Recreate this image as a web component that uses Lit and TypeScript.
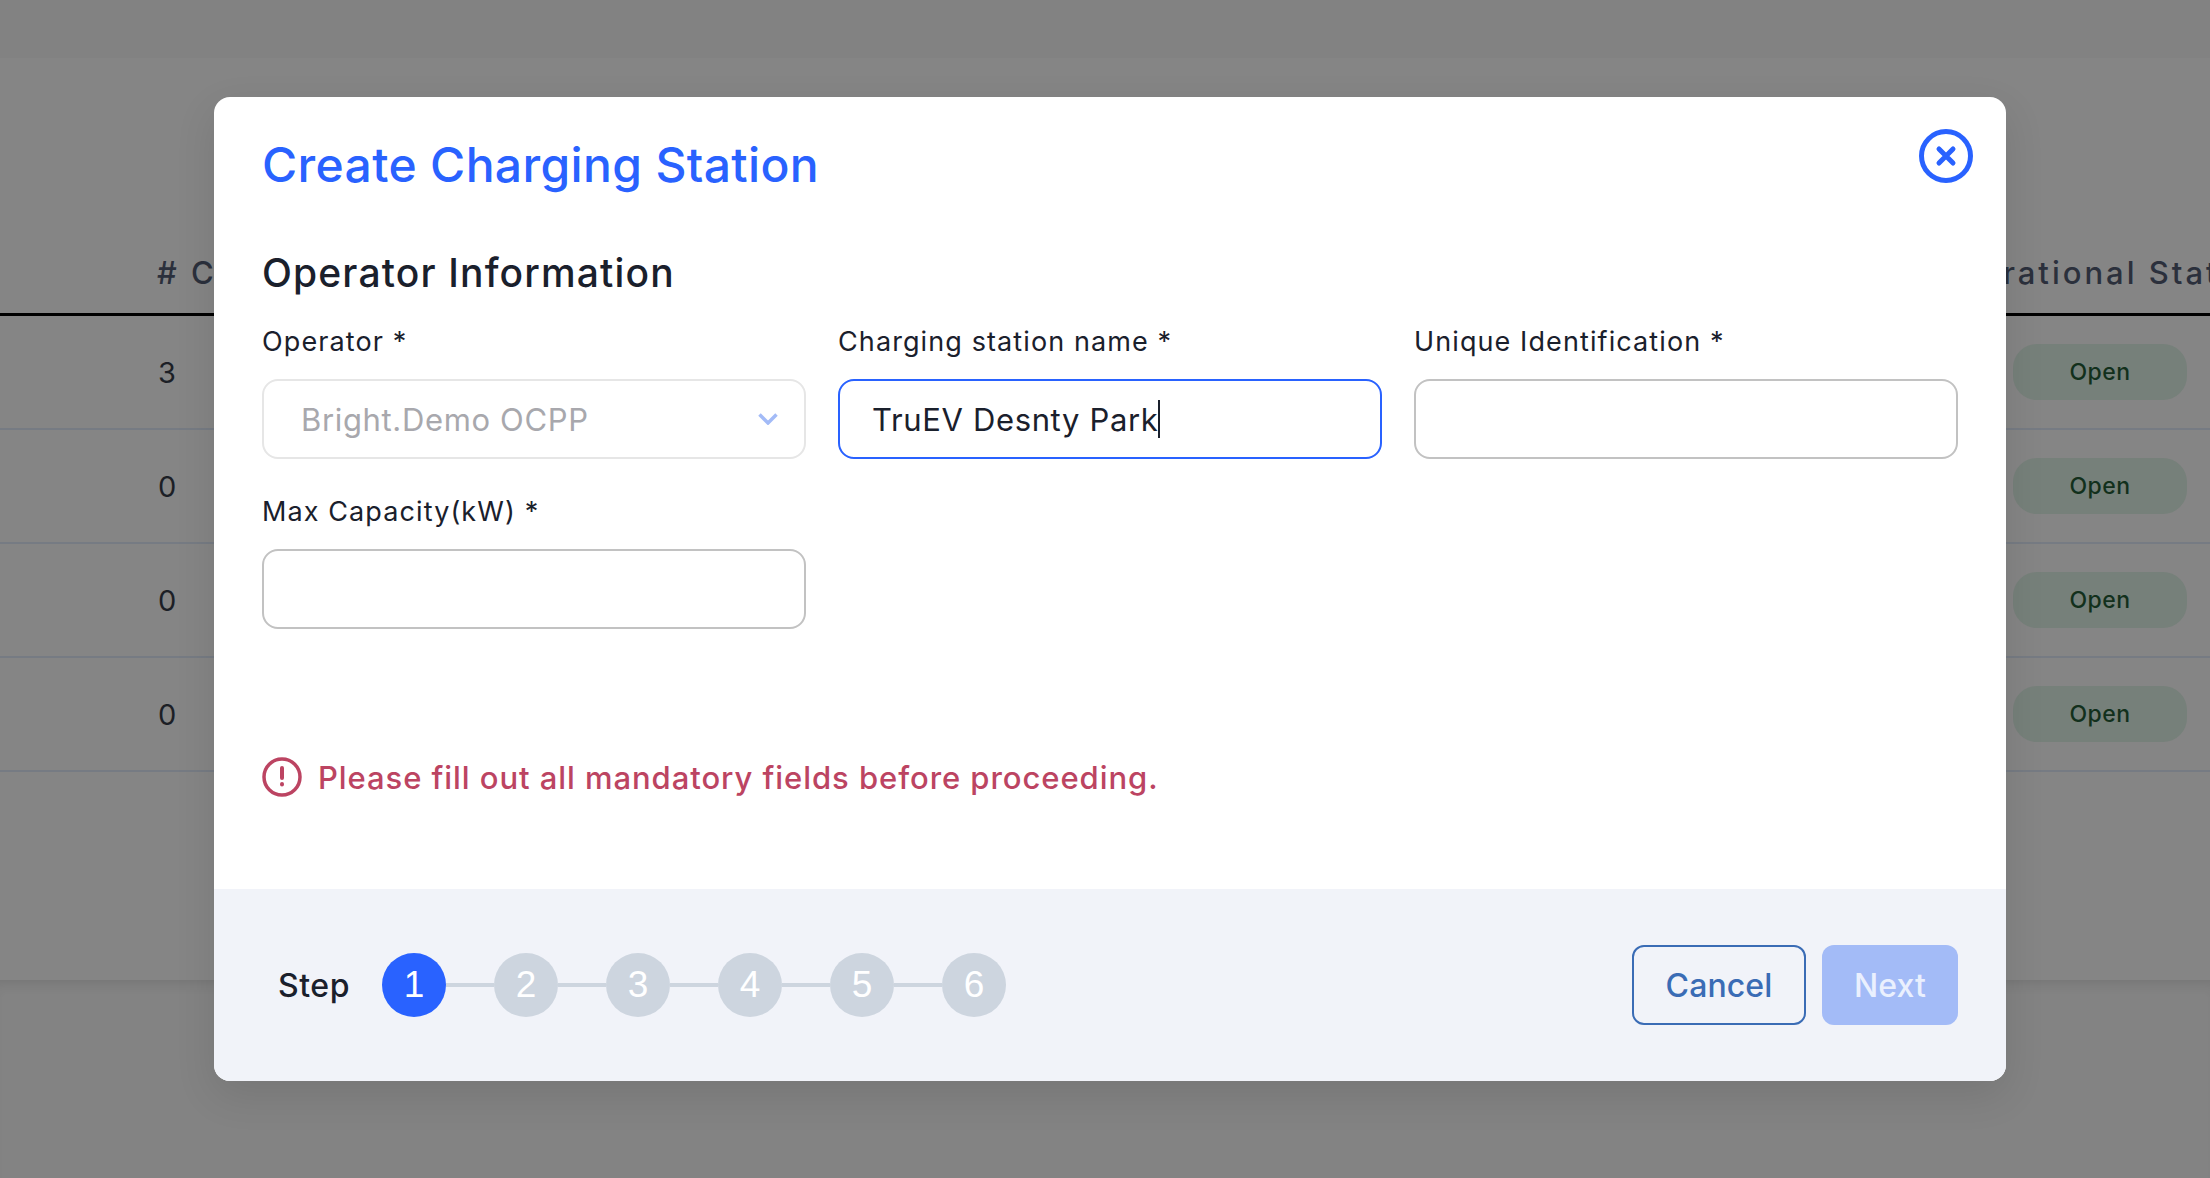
import { LitElement, html, css } from "lit";
import { customElement } from "lit/decorators.js";

@customElement("app-root")
export class AppRoot extends LitElement {
  static styles = css`
    :host { display: block; width: 2210px; height: 1178px; position: relative; overflow: hidden; background: #858585; font-family: "Inter", "Liberation Sans", sans-serif; }
    .page { height: 1178px; display: flex; flex-direction: column; }
    .top { height: 58px; background: #828282; flex: none; }
    .content { height: 922px; flex: none; display: flex; flex-direction: column; padding-top: 174px; box-sizing: border-box; }
    .rest { flex: 1; background: #838383; box-shadow: inset 0 12px 14px -10px rgba(0,0,0,.12); }
    .thead { height: 84px; display: flex; align-items: center; justify-content: space-between; box-sizing: border-box; border-bottom: 3px solid #000; padding-left: 157px; font-size: 31px; font-weight: 500; letter-spacing: 3px; color: #2b303c; white-space: nowrap; }
    .thead span:last-child { margin-right: -51px; }
    .row { height: 114px; box-sizing: border-box; border-bottom: 2px solid #767b83; display: flex; align-items: center; justify-content: space-between; padding: 0 23px 0 158px; font-size: 29px; color: #1c1f26; }
    .pill { width: 174px; height: 56px; border-radius: 24px; background: #76807a; color: #12301c; font-size: 23px; font-weight: 500; letter-spacing: .5px; display: flex; align-items: center; justify-content: center; }
    .overlay { position: absolute; inset: 0; display: flex; align-items: center; padding-left: 214px; }
    .modal { width: 1792px; height: 984px; background: #fff; border-radius: 16px; overflow: hidden; display: flex; flex-direction: column; box-shadow: 0 14px 40px rgba(0,0,0,.1); position: relative; }
    .body { flex: 1; padding: 38px 48px 0; box-sizing: border-box; color: #1a202c; }
    h1 { margin: 0; font-size: 48px; line-height: 60px; font-weight: 500; letter-spacing: .35px; color: #2962ff; }
    h2 { margin: 53px 0 0; font-size: 39px; line-height: 50px; font-weight: 500; letter-spacing: 1.15px; }
    .grid { display: grid; grid-template-columns: repeat(3, 544px); column-gap: 32px; row-gap: 35px; margin-top: 26px; }
    label { display: block; font-size: 27px; line-height: 36px; margin-bottom: 19px; letter-spacing: 1.1px; }
    .input { height: 80px; box-sizing: border-box; border: 2px solid #c2c2c2; border-radius: 16px; background: #fff; display: flex; align-items: center; font-size: 31px; letter-spacing: .65px; padding: 0 32px; }
    .input.sel { border-color: #e6e6e6; color: #a8a8ad; padding: 0 26px 0 37px; justify-content: space-between; }
    .input.focus { border-color: #2962ff; }
    .caret { display: inline-block; width: 2px; height: 38px; background: #1a202c; }
    .error { display: flex; align-items: center; gap: 16px; margin-top: 128px; color: #bc4462; font-size: 31px; font-weight: 500; letter-spacing: .94px; }
    .close { position: absolute; right: 33px; top: 32px; width: 54px; height: 54px; }
    .foot { height: 192px; flex: none; background: #f1f3f9; display: flex; align-items: center; justify-content: space-between; padding: 0 48px 0 64px; }
    .steps { display: flex; align-items: center; }
    .word { font-size: 32px; font-weight: 500; letter-spacing: .55px; color: #1a202c; margin-right: 32px; }
    .dot { width: 64px; height: 64px; border-radius: 50%; background: #cdd5df; color: #fff; font-size: 37px; display: flex; align-items: center; justify-content: center; font-family: "Liberation Sans", sans-serif; }
    .dot.on { background: #2962ff; }
    .bar { width: 48px; height: 4px; background: #cdd5df; }
    .actions { display: flex; gap: 16px; }
    .btn { height: 80px; box-sizing: border-box; border-radius: 12px; font-size: 32px; font-weight: 500; letter-spacing: .1px; display: flex; align-items: center; justify-content: center; }
    .cancel { width: 174px; border: 2px solid #3a6cb5; color: #3a6cb5; }
    .next { width: 136px; background: #a3bbf7; color: #eaf0fe; }
  `;

  render() {
    const rows = ["3", "0", "0", "0"];
    return html`
      <div class="page">
        <div class="top"></div>
        <div class="content">
          <div class="thead"><span># Connectors</span><span>Operational Status</span></div>
          ${rows.map((r) => html`<div class="row"><span>${r}</span><span class="pill">Open</span></div>`)}
        </div>
        <div class="rest"></div>
      </div>
      <div class="overlay">
        <div class="modal">
          <svg class="close" viewBox="0 0 54 54" fill="none" stroke="#2962ff">
            <circle cx="27" cy="27" r="24.5" stroke-width="5"></circle>
            <path d="M20 20 L34 34 M34 20 L20 34" stroke-width="5" stroke-linecap="round"></path>
          </svg>
          <div class="body">
            <h1>Create Charging Station</h1>
            <h2>Operator Information</h2>
            <div class="grid">
              <div>
                <label>Operator *</label>
                <div class="input sel">
                  <span>Bright.Demo OCPP</span>
                  <svg width="20" height="12" viewBox="0 0 20 12" fill="none" stroke="#a3bbf7" stroke-width="3.5"><path d="M1.5 1.5 L10 10 L18.5 1.5"></path></svg>
                </div>
              </div>
              <div>
                <label>Charging station name *</label>
                <div class="input focus"><span>TruEV Desnty Park</span><i class="caret"></i></div>
              </div>
              <div>
                <label>Unique Identification *</label>
                <div class="input"></div>
              </div>
              <div>
                <label>Max Capacity(kW) *</label>
                <div class="input"></div>
              </div>
            </div>
            <div class="error">
              <svg width="40" height="40" viewBox="0 0 40 40" fill="none" stroke="#bc4462" stroke-width="3.5">
                <circle cx="20" cy="20" r="18"></circle>
                <path d="M20 11 V21 M20 27 V27.5" stroke-linecap="round" stroke-width="4"></path>
              </svg>
              <span>Please fill out all mandatory fields before proceeding.</span>
            </div>
          </div>
          <div class="foot">
            <div class="steps">
              <span class="word">Step</span>
              ${[1, 2, 3, 4, 5, 6].map(
                (n) => html`${n > 1 ? html`<i class="bar"></i>` : ""}<span class="dot ${n === 1 ? "on" : ""}">${n}</span>`
              )}
            </div>
            <div class="actions">
              <div class="btn cancel">Cancel</div>
              <div class="btn next">Next</div>
            </div>
          </div>
        </div>
      </div>
    `;
  }
}
